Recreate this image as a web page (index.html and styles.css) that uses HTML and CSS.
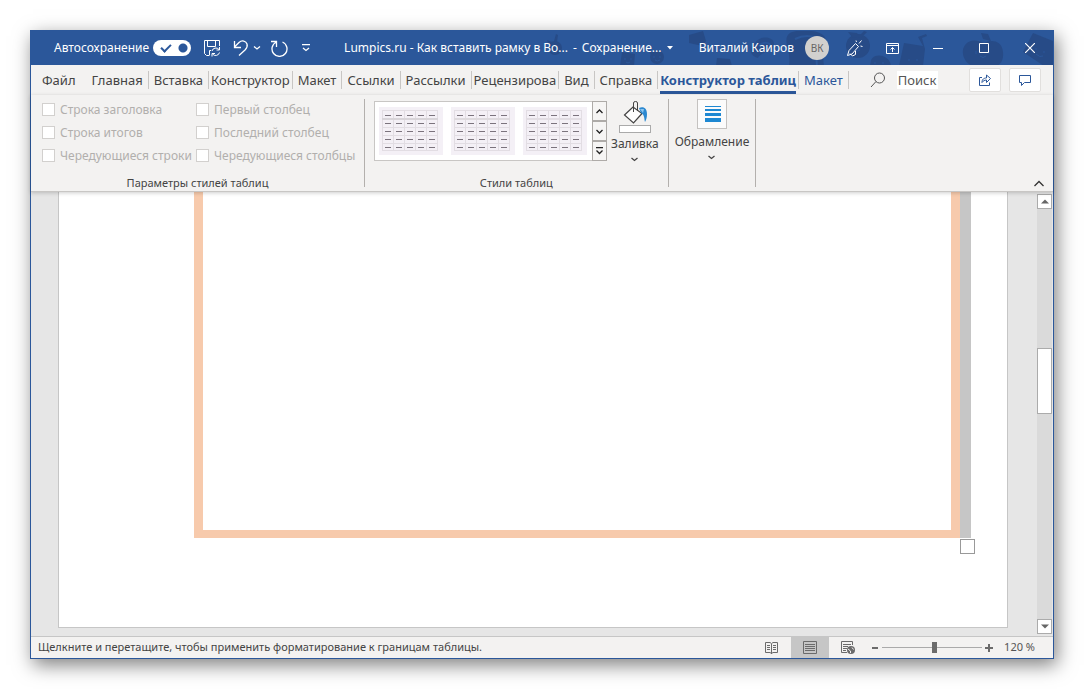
FILE: index.html
```html
<!DOCTYPE html>
<html lang="ru">
<head>
<meta charset="utf-8">
<title>Lumpics.ru - Как вставить рамку в Word</title>
<link rel="stylesheet" href="styles.css">
</head>
<body>
<svg class="defs" aria-hidden="true">
  <defs>
    <pattern id="cells" width="11" height="8" patternUnits="userSpaceOnUse" x="3" y="12">
      <path d="M0 .5H11M.5 0V8" stroke="#e2dde3" fill="none"/>
      <path d="M3 4.500H9" stroke="#7b737d" fill="none"/>
    </pattern>
    <symbol id="table-style" viewBox="0 0 64 48">
      <rect width="64" height="48" fill="#f4f0f6"/>
      <rect x="3" y="12" width="55" height="32" fill="url(#cells)"/>
      <path d="M3.500 3V44M14.500 3V44M25.500 3V44M36.500 3V44M47.500 3V44M58.500 3V44M3 3.500H59M3 43.500H59" stroke="#e2dde3" fill="none"/>
      <path d="M6 8.500H12M17 8.500H23M28 8.500H34M39 8.500H45M50 8.500H56" stroke="#7b737d" fill="none"/>
    </symbol>
  </defs>
</svg>
<div class="window">
  <header class="titlebar">
    <svg class="doodles" width="520" height="34" viewBox="0 0 520 34" aria-hidden="true">
      <g fill="#274b87">
        <circle cx="22" cy="17" r="7"/><path d="M21 10l2-7 2 1-1 7zM14 9l5 2-3 3z"/>
        <path d="M89 21l13 2-1 12H87z"/><circle cx="124" cy="26" r="7"/><path d="M116 21l7-1-4 5z"/>
        <path d="M156 4l14-4 3 10-3 5-14-3z"/>
        <path d="M222 12c5-8 19-7 19 1s-13 7-16 14c-8-2-10-9-3-15z" opacity=".8"/>
        <path d="M184 27l13 1 2 7h-16z"/>
        <path d="M257 2c8-4 28-3 33 2 7 7-2 13 1 31h-35c3-14-8-27 1-33z"/>
        <circle cx="325" cy="15" r="12"/><path d="M315 1l9 1 4 5-9-1zM325 6l6-6 3 1-6 6z"/>
        <path d="M338 29c4-8 19-5 20 6h-21z"/>
        <path d="M371 12l19 3-5-9 8-3 1 2-5 2 3 11-2 17h-24z"/>
        <path d="M432 14c6-7 14-4 19-2 7-4 18-3 19 9 1 8-3 14-8 14h-23c-8-4-12-14-7-21z"/><path d="M448 2l7 1 3 7-8-2z"/>
        <path d="M500 2l20 8v25h-9l-21-14z"/>
      </g>
      <g fill="none" stroke="#2b579a">
        <path d="M18 17v2M25 17v2M19 21q3 2 5 0M92 27v2M98 27v2M93 31q2 2 4 0M121 25v2M127 25v2M122 29q2 2 5 0M320 15v2M328 15v2M322 19q3 2 5 0M342 31v2M350 31v2M376 28v2M384 28v2M443 20v3M456 20v3M447 25q3 3 6 0M503 17v2M511 20v2M503 23q4 4 7 2"/>
        <path d="M262 8c8-4 20-4 23 1 2 5-3 10-1 26M226 15c4-5 11-3 11-1" stroke-width="2"/>
      </g>
    </svg>
    <div class="quick">
      <label class="autosave" for="autosave">Автосохранение</label>
      <input class="toggle" type="checkbox" id="autosave" checked>
      <button class="bare" aria-label="Сохранить"><svg width="18" height="18" viewBox="0 0 18 18"><path d="M6 16.500H3.500L1.500 14.500V1.500H16.500V7M4.500 2V7.500H12.500V2M6.500 16.500V11.500H8M9 12a4 4 0 0 1 7-1.500M16.500 8v3h-3M16.500 13.500a4 4 0 0 1-7 1.500M9 17.500v-3h3" /></svg></button>
      <button class="bare undo" aria-label="Отменить"><svg width="18" height="18" viewBox="0 0 18 18"><path d="M2.500 2V8.500H9M2.500 8L7 3.500C10 .7 14 2 15 5c1 3-.5 4.500-2 6L7 16.500" stroke-width="1.300"/></svg></button>
      <button class="bare" aria-label="Список отмены"><svg width="8" height="6" viewBox="0 0 8 6"><path d="M1 1.500L4 4L7 1.500" stroke-width="1.300"/></svg></button>
      <button class="bare redo" aria-label="Повторить"><svg width="18" height="18" viewBox="0 0 18 18"><path d="M1 2.500H6.500V8M6.500 3A7.500 7.500 0 1 0 12.500 3" stroke-width="1.300"/></svg></button>
      <button class="bare more" aria-label="Настройка панели"><svg width="8" height="8" viewBox="0 0 8 8"><path d="M0 .5H8M1 4L4 6.500L7 4" stroke-width="1.300"/></svg></button>
    </div>
    <div class="doc-title">
      <span>Lumpics.ru - Как вставить рамку в Во...</span><span>-</span>
      <button class="bare saving">Сохранение...<svg width="6" height="4" viewBox="0 0 6 4"><path d="M0 0H6L3 3.500Z" fill="#fff" stroke="none"/></svg></button>
    </div>
    <div class="account"><span>Виталий Каиров</span><span class="avatar">ВК</span></div>
    <button class="bare pen" aria-label="Рисование"><svg width="18" height="18" viewBox="0 0 18 18"><path d="M1.500 16.500L3 11.500L9.500 4.500L12.500 7.500L6 15ZM4 14.500L6.500 17L9.500 15.500V12M10.500 3L10 1.500M13 4.500L15.500 1.500M14.500 7L16.500 7.500"/></svg></button>
    <div class="controls">
      <button class="bare" aria-label="Параметры ленты"><svg width="13" height="11" viewBox="0 0 13 11"><path d="M.5.5H12.500V10.500H.5ZM.5 2.500H12.500M6.500 9V4.500M4.500 6.500L6.500 4.500L8.500 6.500"/></svg></button>
      <button class="bare" aria-label="Свернуть"><svg width="10" height="10" viewBox="0 0 10 10"><path d="M0 5.500H10"/></svg></button>
      <button class="bare" aria-label="Развернуть"><svg width="10" height="10" viewBox="0 0 10 10"><path d="M.5.5H9.500V9.500H.5Z"/></svg></button>
      <button class="bare" aria-label="Закрыть"><svg width="10" height="10" viewBox="0 0 10 10"><path d="M0 0L10 10M10 0L0 10" stroke-width="1.200"/></svg></button>
    </div>
  </header>

  <nav class="tabs">
    <button class="tab file">Файл</button>
    <button class="tab">Главная</button>
    <button class="tab">Вставка</button>
    <button class="tab tight">Конструктор</button>
    <button class="tab">Макет</button>
    <button class="tab">Ссылки</button>
    <button class="tab">Рассылки</button>
    <button class="tab tight">Рецензирова</button>
    <button class="tab">Вид</button>
    <button class="tab">Справка</button>
    <button class="tab active"><span>Конструктор таблиц</span></button>
    <button class="tab context">Макет</button>
    <div class="search">
      <label for="search"><svg width="16" height="16" viewBox="0 0 16 16"><circle cx="9.500" cy="6" r="5" fill="none" stroke="#555"/><path d="M6 9.500L1 15" stroke="#555"/></svg></label>
      <input id="search" type="text" placeholder="Поиск" aria-label="Поиск">
    </div>
    <div class="actions">
      <button aria-label="Поделиться"><svg width="14" height="14" viewBox="0 0 14 14"><path d="M4 4.500H1.500V12.500H11.500V9.500M4 9.500C4 6 6 5 8.500 5V2L12.500 5.500L8.500 9.500V7C6.500 7 5 8 4 9.500Z"/></svg></button>
      <button aria-label="Примечания"><svg width="14" height="14" viewBox="0 0 14 14"><path d="M1.500 2.500H12.500V9.500H6.500L3.500 12.500V9.500H1.500Z"/></svg></button>
    </div>
  </nav>

  <section class="ribbon">
    <div class="group options">
      <div class="checks">
        <label><input type="checkbox" disabled>Строка заголовка</label>
        <label><input type="checkbox" disabled>Первый столбец</label>
        <label><input type="checkbox" disabled>Строка итогов</label>
        <label><input type="checkbox" disabled>Последний столбец</label>
        <label><input type="checkbox" disabled>Чередующиеся строки</label>
        <label><input type="checkbox" disabled>Чередующиеся столбцы</label>
      </div>
      <h2>Параметры стилей таблиц</h2>
    </div>
    <div class="group styles">
      <div class="styles-row">
        <div class="gallery">
          <div class="samples">
            <button class="bare" aria-label="Стиль 1"><svg width="64" height="48"><use href="#table-style"/><path d="M3 12H59" stroke="#d8d4d9" stroke-width="2"/></svg></button>
            <button class="bare" aria-label="Стиль 2"><svg width="64" height="48"><use href="#table-style"/><path d="M3 12H59" stroke="#dedade" stroke-width="2"/></svg></button>
            <button class="bare" aria-label="Стиль 3"><svg width="64" height="48"><use href="#table-style"/><path d="M3 12H59" stroke="#e2dde3" stroke-width="2"/></svg></button>
          </div>
          <div class="scroller">
            <button aria-label="Вверх"><svg width="7" height="5" viewBox="0 0 7 5"><path d="M.5 4L3.500 1L6.500 4" stroke-width="1.300"/></svg></button>
            <button aria-label="Вниз"><svg width="7" height="5" viewBox="0 0 7 5"><path d="M.5 1L3.500 4L6.500 1" stroke-width="1.300"/></svg></button>
            <button aria-label="Все стили"><svg width="7" height="8" viewBox="0 0 7 8"><path d="M0 .5H7M.5 3.500L3.500 6.500L6.500 3.500" stroke-width="1.300"/></svg></button>
          </div>
        </div>
        <button class="big">
          <svg width="32" height="34" viewBox="0 0 32 34">
            <path d="M5.500 16L14 8L23 14.500L14.500 24Z" fill="#fff" stroke="#444" stroke-width="1.200"/>
            <path d="M14.500 13V4Q14.500 2.500 16.500 2.500T18.500 4V12" fill="none" stroke="#444"/>
            <path d="M20 9C25 7 28 10 28 15C28 19 27 21 26 23C25 20 26 16 22 14Z" fill="#2b88d0" stroke="none"/><path d="M21 10L25 10L24 14Z" fill="#8cc4ee" stroke="none"/>
            <rect x=".5" y="26.500" width="31" height="7" fill="#fff" stroke="#aaa"/>
          </svg>
          <span>Заливка</span>
          <svg class="drop" width="7" height="5" viewBox="0 0 7 5"><path d="M.5 1L3.500 3.500L6.500 1" stroke-width="1.300"/></svg>
        </button>
      </div>
      <h2>Стили таблиц</h2>
    </div>
    <div class="group borders">
      <button class="big">
        <svg width="30" height="30" viewBox="0 0 30 30"><rect x=".5" y=".5" width="29" height="29" fill="#fbfbfb" stroke="#c4c2c0"/><path d="M8 7H24V8H8ZM8 10H24V12H8ZM8 14H24V17H8ZM8 19H24V23H8Z" fill="#1e88d2" stroke="none"/></svg>
        <span>Обрамление</span>
        <svg class="drop" width="7" height="5" viewBox="0 0 7 5"><path d="M.5 1L3.500 3.500L6.500 1" stroke-width="1.300"/></svg>
      </button>
    </div>
    <button class="bare collapse" aria-label="Свернуть ленту"><svg width="12" height="7" viewBox="0 0 12 7"><path d="M1.500 6L6 1.500L10.500 6" stroke="#333" stroke-width="1.300"/></svg></button>
  </section>

  <main class="workspace">
    <div class="canvas">
      <div class="page">
        <div class="frame"></div>
        <div class="edge"><span class="handle"></span></div>
      </div>
    </div>
    <div class="scrollbar">
      <button aria-label="Прокрутить вверх"><svg width="8" height="5" viewBox="0 0 8 5"><path d="M0 4.500L4 .5L8 4.500Z"/></svg></button>
      <div class="rail"><div class="thumb"></div></div>
      <button aria-label="Прокрутить вниз"><svg width="8" height="5" viewBox="0 0 8 5"><path d="M0 .5L4 4.500L8 .5Z"/></svg></button>
    </div>
  </main>

  <footer class="status">
    <p>Щелкните и перетащите, чтобы применить форматирование к границам таблицы.</p>
    <div class="views">
      <button aria-label="Режим чтения"><svg width="14" height="14" viewBox="0 0 14 14"><path d="M.5 1.500H5L6.500 2.500L8 1.500H12.500V11.500H8L6.500 12.500L5 11.500H.5ZM6.500 3V13M2 4.500H5M2 6.500H5M2 8.500H5M8 4.500H11M8 6.500H11M8 8.500H11"/></svg></button>
      <button class="selected" aria-label="Разметка страницы"><svg width="14" height="13" viewBox="0 0 14 13"><path d="M.5.5H13.500V12.500H.5ZM2 3.500H12M2 5.500H12M2 7.500H12M2 9.500H12"/></svg></button>
      <button aria-label="Веб-документ"><svg width="14" height="14" viewBox="0 0 14 14"><path d="M6 11.500H.5V.5H11.500V4M2 3.500H10M2 5.500H7M2 7.500H6M2 9.500H5"/><circle cx="10" cy="9" r="4" fill="#6b6b6b" stroke="none"/><path d="M7 8L9.500 10V12M11 6.500L12.500 8.500" stroke="#f3f2f1"/></svg></button>
    </div>
    <div class="zoom">
      <button aria-label="Уменьшить"><svg width="8" height="8" viewBox="0 0 8 8"><path d="M1 4H7" stroke-width="2"/></svg></button>
      <input type="range" min="10" max="200" value="109" aria-label="Масштаб">
      <button aria-label="Увеличить"><svg width="8" height="8" viewBox="0 0 8 8"><path d="M0 4H8M4 0V8" stroke-width="2"/></svg></button>
      <button class="percent">120 %</button>
    </div>
  </footer>
</div>
</body>
</html>
```
FILE: styles.css
```css
* { box-sizing: border-box; }

body {
  margin: 0;
  padding: 30px;
  height: 100vh;
  background: #fff;
  color: #444;
  font: 12px/16px "Noto Sans", "Open Sans", sans-serif;
}

button, input { font: inherit; color: inherit; margin: 0; }
button { padding: 0; background: none; border: 0; display: flex; align-items: center; justify-content: center; }
button svg { display: block; flex: none; fill: none; stroke: currentColor; }
h2, p { margin: 0; font-size: 11px; font-weight: 400; line-height: 16px; }
.defs { position: absolute; width: 0; height: 0; }

.window {
  display: flex;
  flex-direction: column;
  height: 100%;
  border: 1px solid #2b579a;
  background: #f3f2f1;
  box-shadow: 3px 6px 18px rgba(0, 0, 0, .5);
}

/* Title bar */
.titlebar {
  position: relative;
  display: flex;
  align-items: center;
  height: 34px;
  flex: none;
  background: #2b579a;
  color: #fff;
  font-size: 12px;
  white-space: nowrap;
}
.titlebar > * { position: relative; }
.titlebar .doodles { position: absolute; right: 0; top: 0; }
.quick { display: flex; align-items: center; padding-left: 23px; }
.toggle {
  appearance: none;
  width: 38px;
  height: 16px;
  margin: 0 12px 0 4px;
  border-radius: 8px;
  background: radial-gradient(circle at 30px 8px, #2b579a 4px, transparent 5px), #fff;
  display: flex;
  align-items: center;
}
.toggle::before {
  content: "";
  width: 8px;
  height: 4px;
  margin: 0 0 3px 8px;
  border: solid #2b579a;
  border-width: 0 0 2px 2px;
  transform: rotate(-45deg);
}
.undo { margin: 0 3px 0 11px; }
.redo { margin: 0 14px 0 9px; }
.doc-title { display: flex; gap: 5px; padding-left: 34px; }
.saving { gap: 5px; }
.account { display: flex; align-items: center; gap: 11px; margin-left: auto; }
.avatar {
  width: 24px;
  height: 24px;
  border-radius: 50%;
  background: #d2d0ce;
  color: #666;
  font-size: 10px;
  line-height: 24px;
  text-align: center;
}
.pen { width: 28px; height: 34px; margin-left: 12px; }
.controls { display: flex; }
.controls button { width: 46px; height: 34px; }

/* Tabs */
.tabs { display: flex; align-items: center; height: 30px; flex: none; font-size: 13px; line-height: 18px; white-space: nowrap; }
.tab { height: 18px; padding: 0 5px; border-right: 1px solid #c8c6c4; }
.tab.file { padding: 0 11px; border: 0; }
.tab.tight { padding: 0 2px; }
.tab.context { color: #2b579a; }
.tab.active { padding: 0 2px; color: #2b579a; font-weight: 700; }
.tab.active span { height: 27px; padding-top: 4px; border-bottom: 3px solid #2b579a; }
.search { display: flex; align-items: center; gap: 11px; margin-left: 21px; }
.search label, .search svg { display: block; }
.search input { width: 41px; height: 18px; padding: 0 1px; border: 0; background: #fff; }
.search input::placeholder { color: #555; opacity: 1; }
.actions { display: flex; gap: 8px; margin: 0 12px 0 auto; }
.actions button { width: 32px; height: 24px; background: #fff; border: 1px solid #e1dfdd; border-radius: 2px; color: #2b579a; }

/* Ribbon */
.ribbon { display: flex; height: 97px; flex: none; padding: 4px 0; border-bottom: 1px solid #c8c6c4; position: relative; z-index: 1; box-shadow: 0 1px 4px rgba(0, 0, 0, .2); white-space: nowrap; }
.group { display: flex; flex-direction: column; justify-content: space-between; border-right: 1px solid #b3b0ad; }
.group h2 { text-align: center; height: 12px; }
.checks { display: grid; grid-template-columns: 154px 154px; grid-auto-rows: 23px; margin-top: -1px; padding: 0 14px 0 11px; color: #b1afad; }
.checks label { display: flex; align-items: center; gap: 5px; }
.checks input { appearance: none; flex: none; width: 13px; height: 13px; border: 1px solid #d2d0ce; background: #fff; }
.styles { padding: 0 9px; }
.styles-row { display: flex; gap: 4px; }
.gallery { display: flex; height: 60px; margin-top: 2px; background: #fff; border: 1px solid #c8c6c4; border-right: 0; }
.samples { display: flex; align-items: center; gap: 8px; padding: 0 5px 0 4px; }
.samples svg { stroke: none; }
.scroller { display: grid; grid-template-rows: repeat(3, 1fr); width: 15px; margin: -1px 0; }
.scroller button { background: #f6f5f4; border: 1px solid #aeaba8; color: #222; }
.big { flex-direction: column; justify-content: flex-start; }
.big > span { line-height: 17px; margin-top: 2px; }
.drop { margin-top: 5px; }
.borders { padding: 0 6px; }
.borders .big > span { margin-top: 4px; }
.collapse { margin: auto 8px 0 auto; }

/* Document area */
.workspace { display: flex; flex: 1; min-height: 0; background: #e6e6e6; }
.canvas { display: flex; flex: 1; padding: 0 29px 8px 27px; }
.page { display: flex; flex: 1; padding: 0 36px 89px 135px; background: #fff; border: 1px solid #c6c6c6; border-top: 0; }
.frame { flex: 1; border: solid #f7caac; border-width: 0 9px 8px; }
.edge { position: relative; width: 11px; background: #c6c6c6; }
.handle { position: absolute; left: 0; top: calc(100% + 1px); width: 15px; height: 15px; background: #fff; border: 1px solid #999; }
.scrollbar { display: flex; flex-direction: column; width: 15px; margin: 2px 1px 2px 0; background: #dadada; }
.scrollbar button { height: 15px; background: #fff; border: 1px solid #ababab; }
.scrollbar button svg { fill: #666; stroke: none; }
.rail { flex: 1; display: grid; grid-template-rows: 139fr 66fr 205fr; }
.thumb { grid-row: 2; background: #fff; border: 1px solid #ababab; }

/* Status bar */
.status { display: flex; align-items: center; height: 22px; flex: none; border-top: 1px solid #c6c6c6; white-space: nowrap; }
.status p { padding: 0 0 2px 7px; }
.status button { color: #6b6b6b; }
.views { display: flex; margin-left: auto; }
.views button { width: 38px; height: 21px; }
.views .selected { background: #c6c6c6; }
.zoom { display: flex; align-items: center; margin: 0 18px 0 4px; }
.zoom input { appearance: none; width: 100px; height: 11px; margin: 0 3px; background: linear-gradient(#aaa, #aaa) center / 100% 1px no-repeat; }
.zoom input::-webkit-slider-thumb { appearance: none; width: 5px; height: 11px; background: #6b6b6b; }
.zoom .percent { margin-left: 11px; padding-bottom: 2px; font-size: 11px; color: #555; }
```
